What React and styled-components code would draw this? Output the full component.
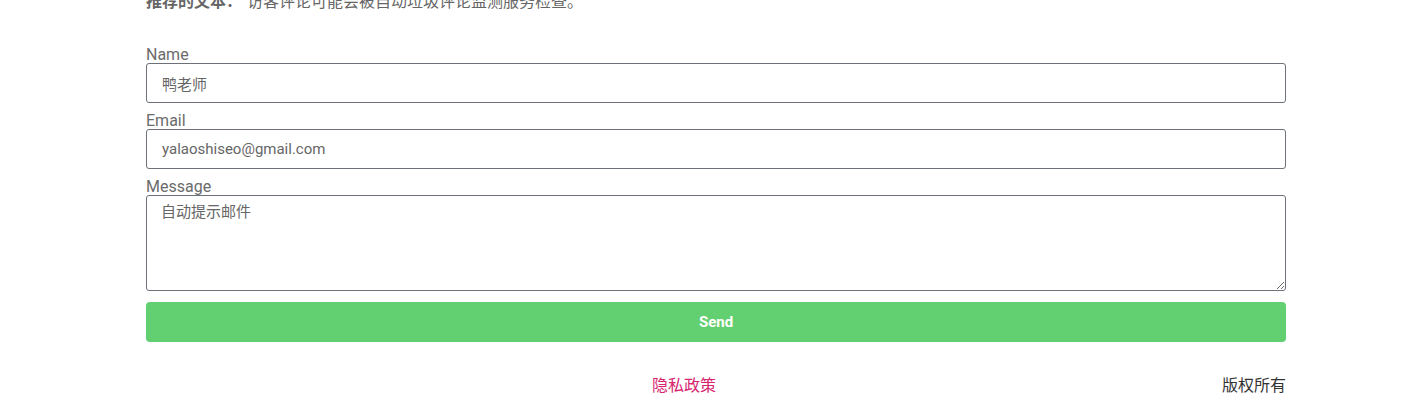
import React from 'react'
import styled, { createGlobalStyle } from 'styled-components'

const GlobalStyle = createGlobalStyle`
  body {
    margin: 0;
    background: #fff;
    font-family: Roboto, "Noto Sans CJK SC", sans-serif;
    overflow: hidden;
  }
`

const Page = styled.div`
  width: 1140px;
  margin-left: 146px;
`

const Notice = styled.p`
  margin: -10px 0 31px;
  font-size: 16px;
  line-height: 24px;
  color: #666;
  font-family: Roboto, "Noto Sans CJK SC", sans-serif;
`

const NoticeTitle = styled.strong`
  font-weight: 700;
  margin-right: 5px;
`

const Form = styled.form`
  display: flex;
  flex-direction: column;
`

const Label = styled.label`
  display: block;
  font-size: 16px;
  line-height: 16px;
  padding-top: 2px;
  color: #6b6b6b;
`

const fieldStyles = `
  box-sizing: border-box;
  width: 100%;
  border: 1px solid #6b7079;
  border-radius: 3px;
  font-family: Roboto, "Noto Sans CJK SC", sans-serif;
  font-size: 15px;
  color: #666;
  background: #fff;
  margin-bottom: 8px;
  outline: none;
`

const Input = styled.input`
  ${fieldStyles}
  height: 40px;
  padding: 0 15px;
`

const TextArea = styled.textarea`
  ${fieldStyles}
  height: 96px;
  padding: 6px 14px;
  line-height: 20px;
  resize: vertical;
  margin-bottom: 11px;
`

const SendButton = styled.button`
  height: 40px;
  border: none;
  border-radius: 4px;
  background: #62cf71;
  color: #fff;
  font-family: Roboto, sans-serif;
  font-size: 15px;
  font-weight: 700;
  cursor: pointer;
`

const Footer = styled.footer`
  display: grid;
  grid-template-columns: 1fr 1fr;
  margin-top: 33px;
  font-size: 16px;
  line-height: 22px;
`

const FooterLink = styled.a`
  text-align: right;
  color: ${p => p.accent ? '#d6246e' : '#333'};
  text-decoration: none;
`

export default function App() {
  return (
    <>
      <GlobalStyle />
      <Page>
        <Notice>
          <NoticeTitle>推荐的文本：</NoticeTitle>
          访客评论可能会被自动垃圾评论监测服务检查。
        </Notice>
        <Form onSubmit={e => e.preventDefault()}>
          <Label htmlFor="name">Name</Label>
          <Input id="name" defaultValue="鸭老师" />
          <Label htmlFor="email">Email</Label>
          <Input id="email" defaultValue="yalaoshiseo@gmail.com" />
          <Label htmlFor="message">Message</Label>
          <TextArea id="message" defaultValue="自动提示邮件" />
          <SendButton type="submit">Send</SendButton>
        </Form>
        <Footer>
          <FooterLink href="#" accent>隐私政策</FooterLink>
          <FooterLink href="#">版权所有</FooterLink>
        </Footer>
      </Page>
    </>
  )
}
